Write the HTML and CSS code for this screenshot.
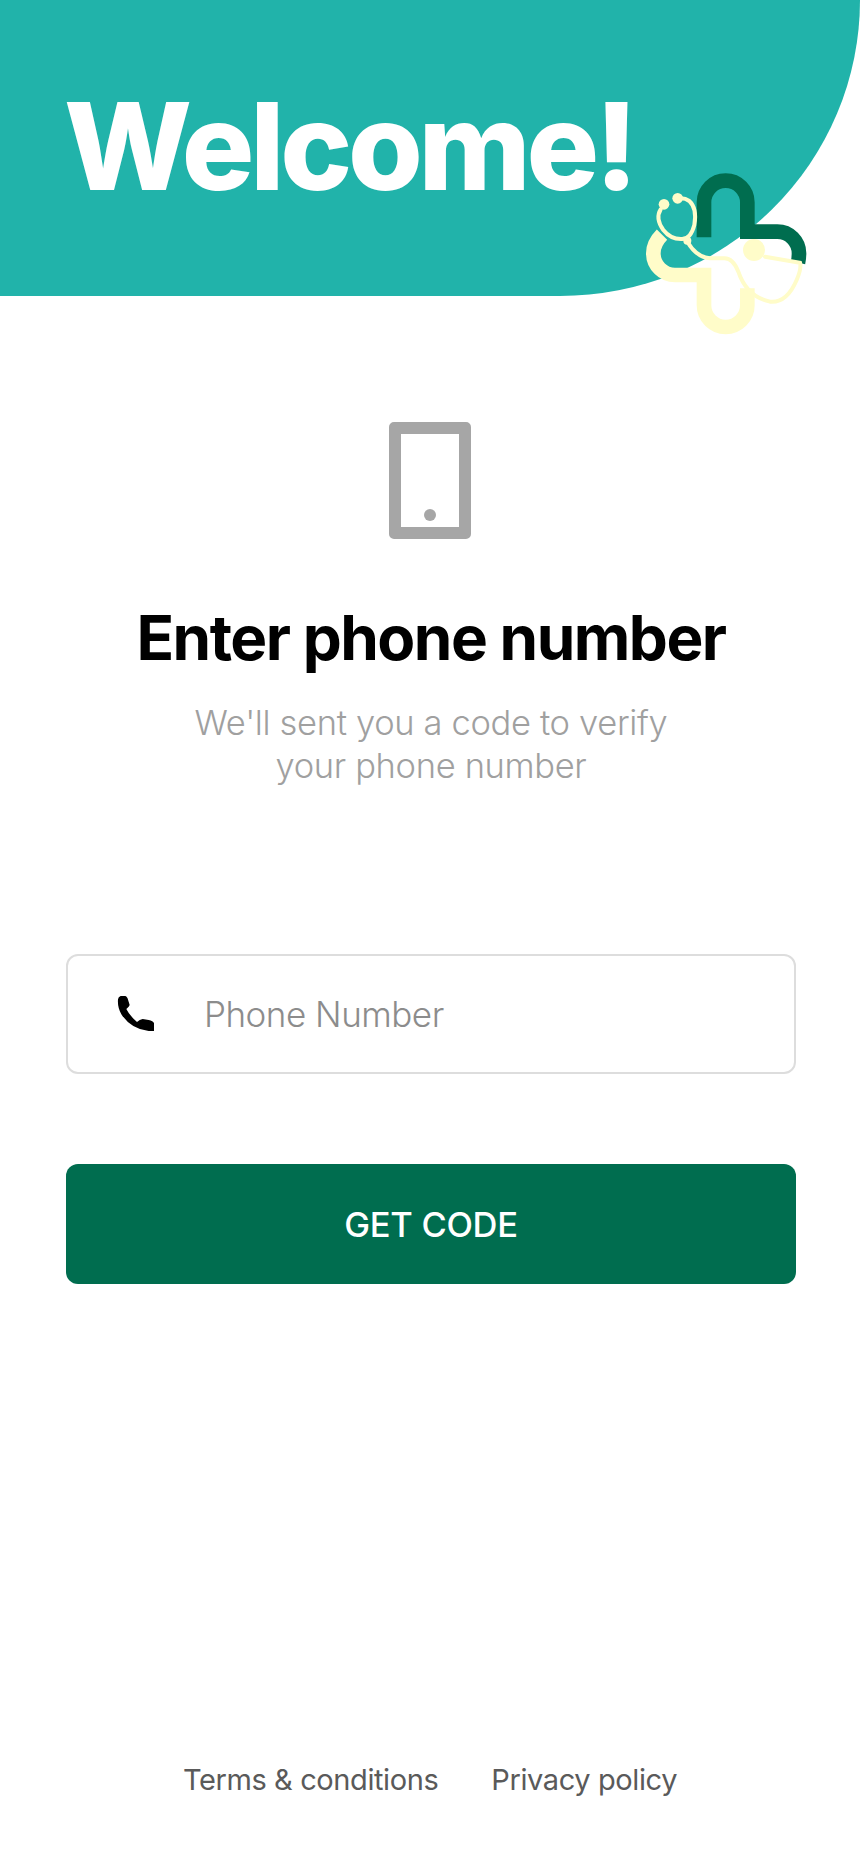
FILE: index.html
```html
<!DOCTYPE html>
<html lang="en">
<head>
    <meta charset="UTF-8">
    <meta name="viewport" content="width=device-width, initial-scale=1.0">
    <title>Welcome</title>
    <link rel="stylesheet" href="styles.css">
</head>
<body>
    <header class="hero">
        <h1 class="hero-title">Welcome!</h1>
        <svg class="hero-logo" viewBox="0 0 780 660" fill="none">
            <!-- cross lobes -->
            <path class="lobe-dark" d="M312 292V187A65 65 0 0 1 442 187V275H532A65 65 0 0 1 597 340Q597 355 594 368"/>
            <path class="lobe-cream" d="M186 284Q160 310 160 340A65 65 0 0 0 225 405H312V496A65 65 0 0 0 442 496V445"/>
            <!-- stethoscope -->
            <path class="tube" d="M182 208Q165 235 190 270Q212 298 245 297Q272 298 283 255Q292 205 268 183Q255 174 240 175"/>
            <path class="tube" d="M262 305Q290 352 330 355H370Q398 352 415 395Q440 470 510 485Q560 490 590 420Q605 385 600 368L495 350"/>
            <circle class="dot" cx="192" cy="193" r="16"/>
            <circle class="dot" cx="233" cy="175" r="16"/>
            <circle class="dot" cx="262" cy="302" r="12"/>
            <circle class="dot" cx="462" cy="330" r="33"/>
        </svg>
    </header>

    <main class="content">
        <svg class="device-icon" viewBox="0 0 82 117">
            <path d="M5 0H77A5 5 0 0 1 82 5V112A5 5 0 0 1 77 117H5A5 5 0 0 1 0 112V5A5 5 0 0 1 5 0ZM12 12V105H70V12Z" fill-rule="evenodd"/>
            <circle cx="41" cy="93" r="6"/>
        </svg>
        <h2 class="title">Enter phone number</h2>
        <p class="subtitle">We'll sent you a code to verify<br>your phone number</p>

        <label class="phone-field">
            <svg class="phone-icon" viewBox="0 0 168 168">
                <path d="M38 30H52Q58 32 61 44L65 57Q64 62 55 69Q64 88 87 108Q95 100 104 99L122 102Q135 104 138 112V135H122Q70 130 40 85Q28 64 30 40Q31 32 38 30Z"/>
            </svg>
            <input class="phone-input" type="tel" placeholder="Phone Number">
        </label>

        <button class="code-button">GET CODE</button>
    </main>

    <footer class="links">
        <a class="link">Terms &amp; conditions</a>
        <a class="link">Privacy policy</a>
    </footer>
</body>
</html>
```

FILE: styles.css
```css
:root {
    --teal: #21b3aa;
    --green: #006d4f;
    --cream: #fffcc9;
}

body, html {
    margin: 0;
    padding: 0;
    height: 100%;
    font-family: 'Inter', 'Noto Sans', sans-serif;
    background: #ffffff;
    overflow: hidden;
}

body {
    display: flex;
    flex-direction: column;
}

.hero {
    position: relative;
    height: 296px;
    padding: 76px 0 0 64px;
    box-sizing: border-box;
    background: var(--teal);
    border-bottom-right-radius: 300px 296px;
}

.hero-title {
    margin: 0;
    font-size: 121px;
    line-height: 140px;
    font-weight: 800;
    letter-spacing: -4.3px;
    color: #ffffff;
}

.hero-logo {
    position: absolute;
    left: 600px;
    top: 140px;
    width: 260px;
    height: 220px;
}

.lobe-dark {
    stroke: var(--green);
    stroke-width: 44;
}

.lobe-cream {
    stroke: var(--cream);
    stroke-width: 44;
}

.tube {
    stroke: var(--cream);
    stroke-width: 12;
    stroke-linecap: round;
}

.dot {
    fill: var(--cream);
}

.content {
    display: flex;
    flex-direction: column;
    align-items: center;
    padding: 126px 64px 0 66px;
}

.device-icon {
    width: 82px;
    height: 117px;
    margin-right: 2px;
    fill: #a6a6a6;
}

.title {
    margin: 64px 0 0;
    font-size: 62px;
    line-height: 70px;
    font-weight: 700;
    letter-spacing: -1.5px;
    color: #000000;
}

.subtitle {
    margin: 28px 0 0;
    font-size: 34.5px;
    line-height: 43px;
    font-weight: 300;
    letter-spacing: -0.35px;
    text-align: center;
    color: #a0a0a0;
}

.phone-field {
    display: flex;
    align-items: center;
    gap: 40px;
    width: 100%;
    height: 120px;
    margin-top: 167px;
    padding-left: 40px;
    box-sizing: border-box;
    border: 2px solid #dddddd;
    border-radius: 12px;
}

.phone-icon {
    width: 56px;
    height: 56px;
    flex-shrink: 0;
}

.phone-input {
    flex: 1;
    min-width: 0;
    border: none;
    outline: none;
    padding: 0;
    font-family: inherit;
    font-size: 35px;
    font-weight: 300;
    letter-spacing: -0.5px;
    background: transparent;
}

.phone-input::placeholder {
    color: #8c8c8c;
    opacity: 1;
}

.code-button {
    width: 100%;
    height: 120px;
    margin-top: 90px;
    border: none;
    border-radius: 12px;
    background: var(--green);
    color: #ffffff;
    font-family: inherit;
    font-size: 34.5px;
    font-weight: 500;
    letter-spacing: -0.3px;
}

.links {
    display: flex;
    justify-content: center;
    gap: 53px;
    margin-top: auto;
    padding: 0 0 64px 0;
}

.link {
    font-size: 29px;
    line-height: 40px;
    letter-spacing: -0.4px;
    color: #5a5a5a;
}
```
